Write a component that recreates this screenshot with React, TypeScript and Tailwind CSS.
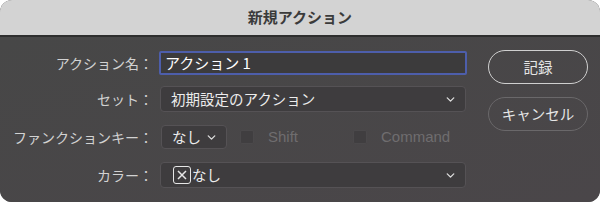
import { ChevronDown } from 'lucide-react'

const font = { fontFamily: '"Noto Sans CJK JP", "Noto Sans", sans-serif' }

function Label({ children }: { children: string }) {
  return (
    <div className="w-[159px] shrink-0 text-right text-[14px] text-[#d2d2d2] pr-[6px]">
      {children}
    </div>
  )
}

function Select({ children, className }: { children: React.ReactNode; className: string }) {
  return (
    <div
      className={`flex items-center justify-between rounded-[4px] border border-[#555255] bg-[#3e3c3e] pl-[10px] pr-[8px] text-[14.5px] text-[#ececec] ${className}`}
    >
      <div className="flex items-center">{children}</div>
      <ChevronDown className="h-[13px] w-[13px] text-[#dcdcdc]" strokeWidth={2.5} />
    </div>
  )
}

function Check({ label }: { label: string }) {
  return (
    <div className="flex items-center gap-[14px]">
      <div className="h-[14px] w-[14px] rounded-[2px] border border-[#4b494b] bg-[#403e40]" />
      <span className="text-[15px] text-[#6f6d6f]" style={{ fontFamily: '"Liberation Sans", sans-serif' }}>
        {label}
      </span>
    </div>
  )
}

export default function App() {
  return (
    <div className="h-[202px] w-[600px] bg-white" style={font}>
      <div className="flex h-[202px] flex-col overflow-hidden rounded-[12px] bg-[#474647]">
        <div className="flex h-[37px] shrink-0 items-center justify-center border-b-[2px] border-[#2e2e2e] bg-[#d3d3d3] text-[15px] font-bold text-[#3b3b3b]">
          新規アクション
        </div>
        <div className="flex flex-1 bg-gradient-to-br from-[#474747] to-[#4a4649]">
          <div className="flex flex-col pt-[14px]">
            <div className="flex h-[24px] items-center">
              <Label>アクション名：</Label>
              <div className="flex h-[24px] w-[308px] items-center rounded-[2px] border-[2px] border-[#4d5eab] bg-[#3c3b3c] pl-[4px] text-[15px] text-white">
                アクション 1
              </div>
            </div>
            <div className="mt-[11px] flex h-[26px] items-center">
              <Label>セット：</Label>
              <Select className="ml-[1px] h-[26px] w-[306px]">初期設定のアクション</Select>
            </div>
            <div className="mt-[13px] flex h-[24px] items-center">
              <Label>ファンクションキー：</Label>
              <Select className="ml-[2px] h-[24px] w-[66px]">なし</Select>
              <div className="ml-[13px]">
                <Check label="Shift" />
              </div>
              <div className="ml-[55px]">
                <Check label="Command" />
              </div>
            </div>
            <div className="mt-[13px] flex h-[26px] items-center">
              <Label>カラー：</Label>
              <Select className="ml-[1px] h-[26px] w-[306px]">
                <span className="ml-[2px] mr-[1px] flex h-[18px] w-[18px] items-center justify-center rounded-[3px] border-[1.5px] border-[#e6e6e6]">
                  <svg width="10" height="10" viewBox="0 0 10 10">
                    <path d="M1 1L9 9M9 1L1 9" stroke="#e6e6e6" strokeWidth="1.5" />
                  </svg>
                </span>
                なし
              </Select>
            </div>
          </div>
          <div className="ml-[21px] flex flex-col gap-[13px] pt-[13px]">
            <div className="flex h-[34px] w-[100px] items-center justify-center rounded-full border-[1.5px] border-[#cfcfcf] text-[14.5px] text-[#e6e6e6]">
              記録
            </div>
            <div className="flex h-[34px] w-[100px] items-center justify-center rounded-full border-[1.5px] border-[#6a686a] text-[14.5px] text-[#e6e6e6]">
              キャンセル
            </div>
          </div>
        </div>
      </div>
    </div>
  )
}
